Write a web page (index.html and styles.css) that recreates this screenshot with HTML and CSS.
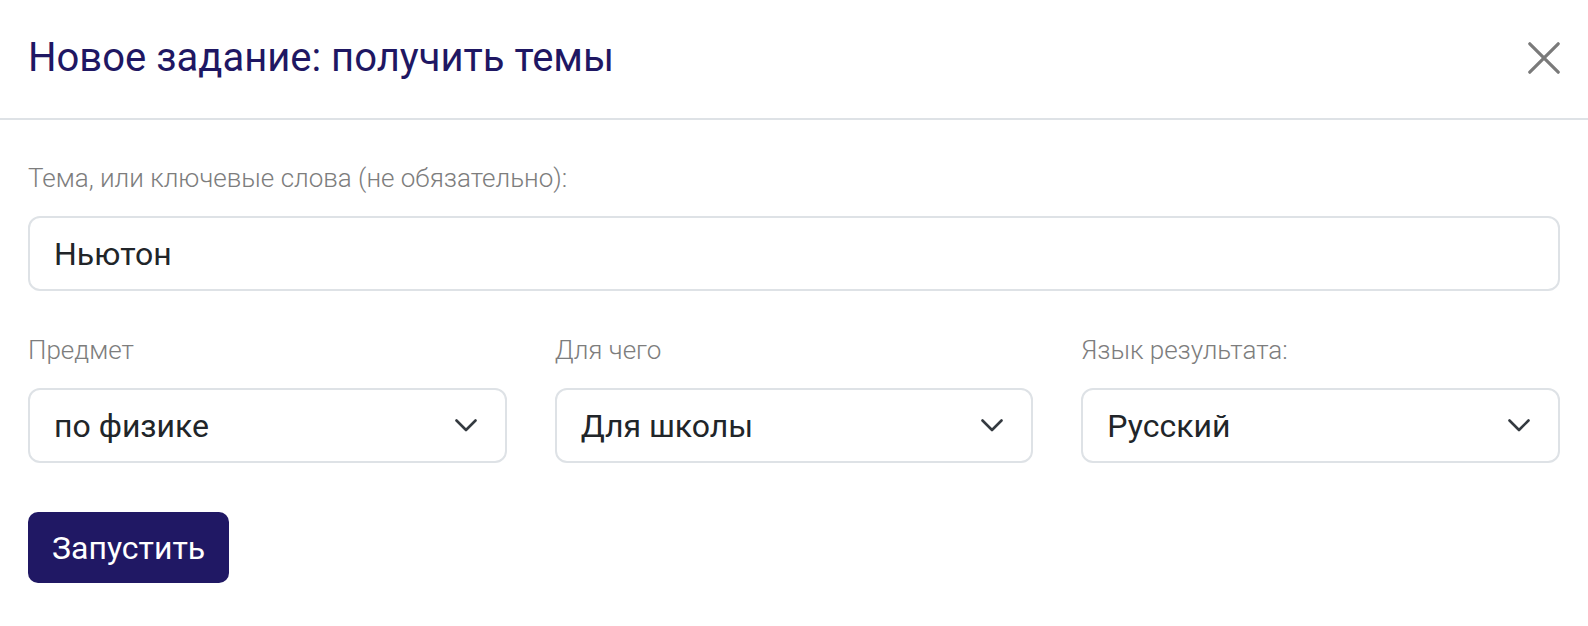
FILE: index.html
```html
<!DOCTYPE html>
<html lang="ru">
<head>
<meta charset="utf-8">
<title>Новое задание</title>
<link rel="stylesheet" href="styles.css">
</head>
<body>
<div class="modal">
  <header class="modal-header">
    <h1 class="modal-title">Новое задание: получить темы</h1>
    <button class="close" aria-label="Закрыть">
      <svg viewBox="0 0 32 32" width="32" height="32"><path d="M1.8 1.8 L30.2 30.2 M30.2 1.8 L1.8 30.2" stroke="#7a7a7a" stroke-width="3.2" stroke-linecap="round" fill="none"/></svg>
    </button>
  </header>
  <div class="modal-body">
    <label class="label">Тема, или ключевые слова (не обязательно):</label>
    <div class="field">Ньютон</div>
    <div class="row">
      <div class="col">
        <label class="label">Предмет</label>
        <div class="field select"><span>по физике</span><svg class="chev" viewBox="0 0 22 13" width="22" height="13"><path d="M1.5 1.5 L11 11 L20.5 1.5" stroke="#343a40" stroke-width="2.6" stroke-linecap="round" stroke-linejoin="round" fill="none"/></svg></div>
      </div>
      <div class="col">
        <label class="label">Для чего</label>
        <div class="field select"><span>Для школы</span><svg class="chev" viewBox="0 0 22 13" width="22" height="13"><path d="M1.5 1.5 L11 11 L20.5 1.5" stroke="#343a40" stroke-width="2.6" stroke-linecap="round" stroke-linejoin="round" fill="none"/></svg></div>
      </div>
      <div class="col">
        <label class="label">Язык результата:</label>
        <div class="field select"><span>Русский</span><svg class="chev" viewBox="0 0 22 13" width="22" height="13"><path d="M1.5 1.5 L11 11 L20.5 1.5" stroke="#343a40" stroke-width="2.6" stroke-linecap="round" stroke-linejoin="round" fill="none"/></svg></div>
      </div>
    </div>
    <button class="btn">Запустить</button>
  </div>
</div>
</body>
</html>
```
FILE: styles.css
```css
* { box-sizing: border-box; }
html, body { margin: 0; padding: 0; background: #fff; }
body { font-family: Roboto, "Liberation Sans", sans-serif; }

.modal { width: 1588px; }

.modal-header {
  height: 120px;
  display: flex;
  align-items: center;
  justify-content: space-between;
  padding: 0 28px 2px 28px;
  border-bottom: 2px solid #dee2e6;
}
.modal-title {
  margin: 0;
  font-size: 40px;
  font-weight: 400;
  color: #1f1763;
  line-height: 1.2;
}
.close {
  background: none;
  border: 0;
  padding: 0;
  display: flex;
}

.modal-body { padding: 44px 28px 0 28px; }

.label {
  display: block;
  font-size: 26px;
  font-weight: 300;
  color: #7d7d7d;
  line-height: 28px;
  margin-bottom: 24px;
}

.field {
  height: 75px;
  border: 2px solid #dee2e6;
  border-radius: 12px;
  padding: 0 24px;
  display: flex;
  align-items: center;
  font-size: 32px;
  color: #212529;
}

.row {
  display: grid;
  grid-template-columns: repeat(3, 1fr);
  column-gap: 48px;
  margin-top: 45px;
}
.select { justify-content: space-between; padding-right: 28px; }
.chev { display: block; }

.btn {
  margin-top: 49px;
  height: 71px;
  padding: 0 24px;
  background: #201864;
  color: #fff;
  border: 0;
  border-radius: 10px;
  font-family: Roboto, "Liberation Sans", sans-serif;
  font-size: 32px;
  font-weight: 400;
}
```
